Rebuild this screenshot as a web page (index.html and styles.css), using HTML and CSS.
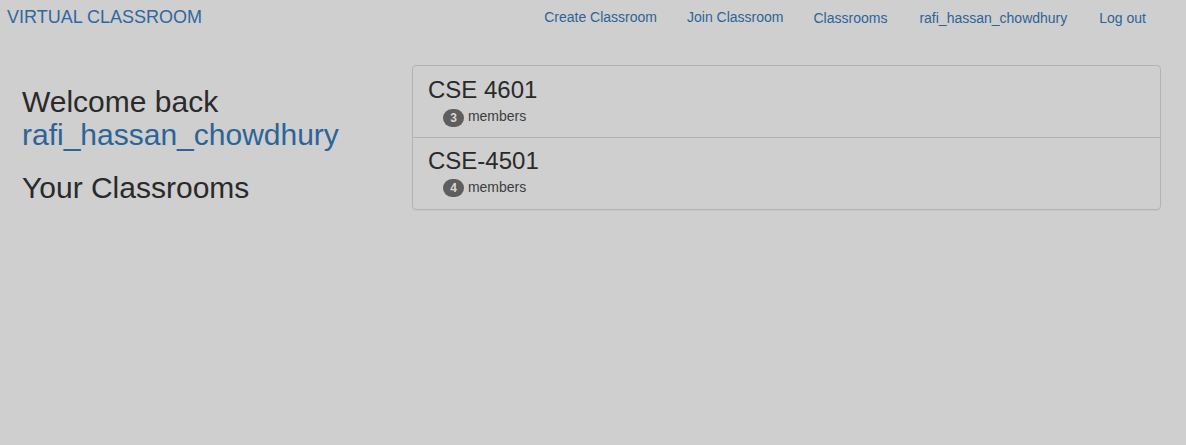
FILE: index.html
```html
<!DOCTYPE html>
<html>
<head>
<meta charset="utf-8">
<link rel="stylesheet" href="styles.css">
</head>
<body>
<nav class="navbar">
  <a class="brand" href="#">VIRTUAL CLASSROOM</a>
  <ul class="nav">
    <li class="nav-create"><a href="#">Create Classroom</a></li>
    <li class="nav-join"><a href="#">Join Classroom</a></li>
    <li class="nav-classrooms"><a href="#">Classrooms</a></li>
    <li class="nav-user"><a href="#">rafi_hassan_chowdhury</a></li>
    <li class="nav-logout"><a href="#">Log out</a></li>
  </ul>
</nav>
<main class="main">
  <section class="side">
    <h2 class="welcome">Welcome back<br><a href="#">rafi_hassan_chowdhury</a></h2>
    <h2 class="heading">Your Classrooms</h2>
  </section>
  <section class="list-group">
    <a class="list-item" href="#">
      <h3 class="item-title">CSE 4601</h3>
      <p class="item-meta"><span class="badge">3</span> members</p>
    </a>
    <a class="list-item" href="#">
      <h3 class="item-title">CSE-4501</h3>
      <p class="item-meta"><span class="badge">4</span> members</p>
    </a>
  </section>
</main>
</body>
</html>
```

FILE: styles.css
```css
html, body {
  margin: 0;
  padding: 0;
}
body {
  background: #cfcfcf;
  color: #2a2a2a;
  font-family: "Liberation Sans", Arial, Helvetica, sans-serif;
  font-size: 14px;
  line-height: 1.42857;
  height: 445px;
}
a {
  color: #2c6498;
  text-decoration: none;
}
.navbar {
  display: flex;
  align-items: center;
  height: 35px;
  padding: 0 25px 0 7px;
}
.brand {
  font-size: 18px;
  line-height: 20px;
  color: #2f67a0;
  margin-top: -2px;
}
.nav {
  display: flex;
  list-style: none;
  margin: 0 0 0 auto;
  padding: 0;
}
.nav li a {
  display: block;
  padding: 0 15px;
  line-height: 20px;
  color: #2c6498;
}
.nav-create a,
.nav-join a {
  margin-top: -1px;
}
.nav-user {
  margin-left: 2px;
}
.nav-logout {
  margin-left: 2px;
}
.main {
  display: flex;
  align-items: flex-start;
  padding: 30px 25px 0 22px;
}
.side {
  width: 390px;
  flex: none;
}
.side h2 {
  font-size: 30px;
  font-weight: 500;
  line-height: 1.1;
  margin: 0 0 10px;
}
.welcome {
  margin-top: 20px !important;
}
.heading {
  margin-top: 20px !important;
}
.list-group {
  flex: 1;
  border: 1px solid #b3b3b3;
  border-radius: 4px;
  box-shadow: 0 1px 1px rgba(0, 0, 0, 0.04);
}
.list-item {
  display: block;
  padding: 11px 15px 10px;
  color: #2a2a2a;
}
.list-item + .list-item {
  border-top: 1px solid #b3b3b3;
  padding-top: 10px;
  padding-bottom: 12px;
}
.item-title {
  font-size: 24px;
  font-weight: 500;
  line-height: 1.1;
  margin: 0 0 3px;
}
.item-meta {
  margin: 0;
  padding-left: 15px;
  line-height: 20px;
  color: #3d3d3d;
}
.badge {
  display: inline-block;
  min-width: 7px;
  padding: 3px 7px;
  font-size: 12px;
  font-weight: bold;
  line-height: 1;
  color: #d8d8d8;
  text-align: center;
  vertical-align: middle;
  background: #5e5e5e;
  border-radius: 10px;
}
```
